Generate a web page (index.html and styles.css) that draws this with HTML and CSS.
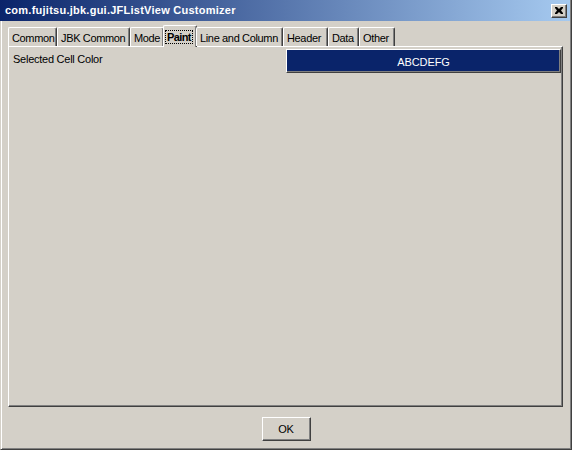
FILE: index.html
```html
<!DOCTYPE html>
<html>
<head>
<meta charset="utf-8">
<link rel="stylesheet" href="styles.css">
</head>
<body>
<div class="window">
  <div class="titlebar">
    <span class="title">com.fujitsu.jbk.gui.JFListView Customizer</span>
    <span class="close"><svg width="8" height="7" viewBox="0 0 8 7"><path d="M0 0h2l2 2 2-2h2v1l-2 2.5 2 2.5v1h-2l-2-2-2 2h-2v-1l2-2.5-2-2.5z" fill="#000"/></svg></span>
  </div>
  <div class="content">
    <div class="tabs">
      <div class="tab w-common">Common</div>
      <div class="tab w-jbk">JBK Common</div>
      <div class="tab w-mode">Mode</div>
      <div class="tab selected w-paint"><span class="focus">Paint</span></div>
      <div class="tab w-line">Line and Column</div>
      <div class="tab w-header">Header</div>
      <div class="tab w-data">Data</div>
      <div class="tab w-other">Other</div>
    </div>
    <div class="panel">
      <div class="row">
        <span class="label">Selected Cell Color</span>
        <div class="swatch">ABCDEFG</div>
      </div>
    </div>
    <div class="buttons">
      <div class="btn">OK</div>
    </div>
  </div>
</div>
</body>
</html>
```
FILE: styles.css
```css
* { box-sizing: border-box; }
html, body { margin: 0; padding: 0; }
body {
  width: 572px;
  height: 450px;
  overflow: hidden;
  background: #D4D0C8;
  font-family: "Liberation Sans", Arial, sans-serif;
  font-size: 11px;
  letter-spacing: -0.25px;
  color: #000;
}
.window {
  width: 572px;
  height: 450px;
  background: #D4D0C8;
  border-left: 1px solid #D4D0C8;
  border-right: 1px solid #404040;
  border-bottom: 1px solid #404040;
  box-shadow: inset 1px 0 #fff, inset -1px -1px #808080;
  display: flex;
  flex-direction: column;
}
.titlebar {
  height: 21px;
  margin-left: -1px;
  margin-right: 1px;
  background: linear-gradient(to right, #0A246A, #A6CAF0);
  display: flex;
  align-items: center;
  justify-content: space-between;
  padding: 0 3px 0 5px;
}
.title {
  color: #fff;
  font-weight: bold;
  font-size: 11px;
  letter-spacing: 0.25px;
  padding-bottom: 1px;
}
.close {
  width: 16px;
  height: 14px;
  background: #D4D0C8;
  border-top: 1px solid #fff;
  border-left: 1px solid #fff;
  border-right: 1px solid #404040;
  border-bottom: 1px solid #404040;
  box-shadow: inset -1px -1px #808080;
  display: flex;
  align-items: center;
  justify-content: center;
  padding: 0 1px 1px 0;
}
.close svg { display: block; }
.content {
  flex: 1;
  display: flex;
  flex-direction: column;
  padding: 6px 8px 0 7px;
}
.tabs {
  display: flex;
  align-items: flex-end;
  height: 19px;
  position: relative;
  z-index: 1;
}
.tab {
  height: 19px;
  border-top: 1px solid #fff;
  border-left: 1px solid #fff;
  border-right: 1px solid #404040;
  border-radius: 2px 2px 0 0;
  box-shadow: inset -1px 0 #808080;
  padding: 4px 0 0 3px;
  white-space: nowrap;
  background: #D4D0C8;
  letter-spacing: -0.35px;
}
.tab.selected {
  height: 22px;
  margin-bottom: -1px;
  font-weight: bold;
  padding: 5px 0 0 2px;
  margin-left: -1px;
  margin-right: -1px;
}
.focus {
  outline: 1px dotted #000;
  outline-offset: 0;
  padding: 0 1px;
  letter-spacing: -0.6px;
}
.w-common { width: 49px; }
.w-jbk { width: 73px; }
.w-mode { width: 34px; }
.w-paint { width: 34px; }
.w-line { width: 87px; }
.w-header { width: 45px; }
.w-data { width: 31px; }
.w-other { width: 36px; }
.panel {
  height: 361px;
  border-top: 1px solid #fff;
  border-left: 1px solid #fff;
  border-right: 1px solid #404040;
  border-bottom: 1px solid #404040;
  box-shadow: inset -1px -1px #808080;
  padding: 2px 1px 0 4px;
}
.row {
  display: flex;
  align-items: flex-start;
  justify-content: space-between;
}
.label {
  padding-top: 4px;
}
.swatch {
  width: 275px;
  height: 24px;
  background: #0A246A;
  color: #fff;
  border-top: 1px solid #fff;
  border-left: 1px solid #fff;
  border-right: 1px solid #404040;
  border-bottom: 1px solid #404040;
  box-shadow: inset -1px -1px #808080;
  display: flex;
  align-items: center;
  justify-content: center;
  padding-top: 2px;
  letter-spacing: -0.1px;
}
.buttons {
  display: flex;
  justify-content: center;
  padding-top: 10px;
  padding-left: 1px;
}
.btn {
  width: 49px;
  height: 24px;
  border-top: 1px solid #fff;
  border-left: 1px solid #fff;
  border-right: 1px solid #404040;
  border-bottom: 1px solid #404040;
  box-shadow: inset -1px -1px #808080;
  display: flex;
  align-items: center;
  justify-content: center;
}
```
